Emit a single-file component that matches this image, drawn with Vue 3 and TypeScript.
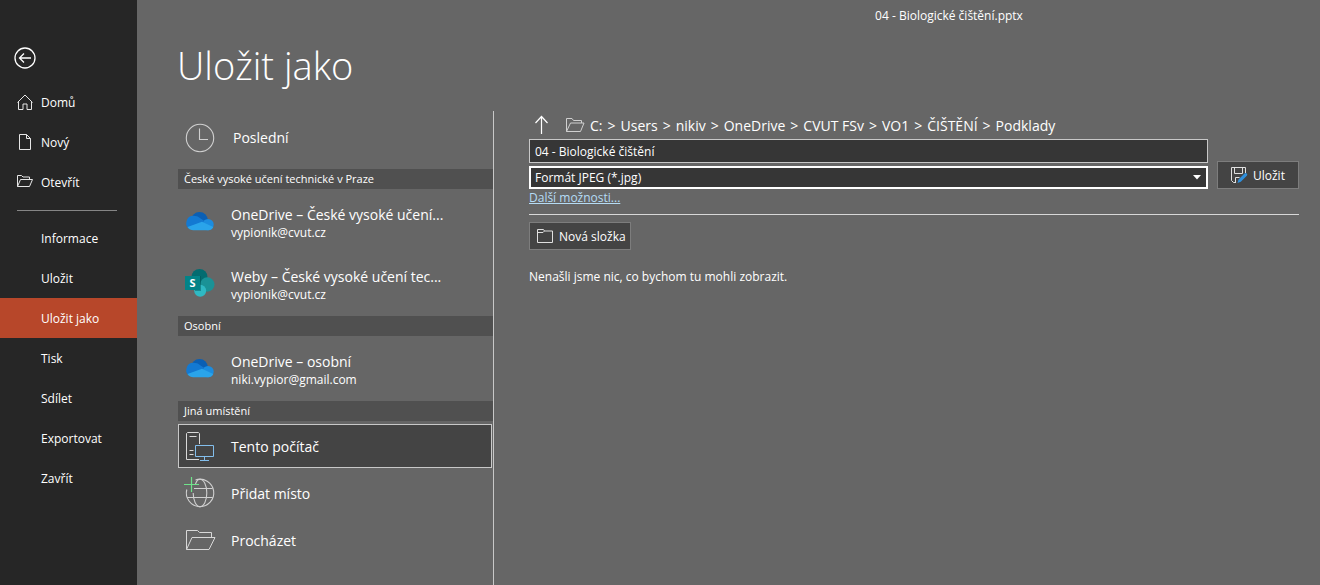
<script setup lang="ts">
import { ref } from 'vue'

interface NavEntry {
  id: string
  label: string
  icon?: 'home' | 'file' | 'folder'
}

interface Place {
  id: string
  title: string
  account?: string
  icon: 'onedrive' | 'sharepoint' | 'computer' | 'globe' | 'browse'
}

interface PlaceGroup {
  heading: string
  places: Place[]
}

const primaryNav: NavEntry[] = [
  { id: 'home', label: 'Domů', icon: 'home' },
  { id: 'new', label: 'Nový', icon: 'file' },
  { id: 'open', label: 'Otevřít', icon: 'folder' },
]

const secondaryNav: NavEntry[] = [
  { id: 'info', label: 'Informace' },
  { id: 'save', label: 'Uložit' },
  { id: 'saveas', label: 'Uložit jako' },
  { id: 'print', label: 'Tisk' },
  { id: 'share', label: 'Sdílet' },
  { id: 'export', label: 'Exportovat' },
  { id: 'close', label: 'Zavřít' },
]

const groups: PlaceGroup[] = [
  {
    heading: 'České vysoké učení technické v Praze',
    places: [
      { id: 'od-school', title: 'OneDrive – České vysoké učení...', account: 'vypionik@cvut.cz', icon: 'onedrive' },
      { id: 'sites', title: 'Weby – České vysoké učení tec...', account: 'vypionik@cvut.cz', icon: 'sharepoint' },
    ],
  },
  {
    heading: 'Osobní',
    places: [
      { id: 'od-personal', title: 'OneDrive – osobní', account: 'niki.vypior@gmail.com', icon: 'onedrive' },
    ],
  },
  {
    heading: 'Jiná umístění',
    places: [
      { id: 'pc', title: 'Tento počítač', icon: 'computer' },
      { id: 'add', title: 'Přidat místo', icon: 'globe' },
      { id: 'browse', title: 'Procházet', icon: 'browse' },
    ],
  },
]

const crumbs: string[] = ['C:', 'Users', 'nikiv', 'OneDrive', 'CVUT FSv', 'VO1', 'ČIŠTĚNÍ', 'Podklady']

const activeNav = ref('saveas')
const activePlace = ref('pc')
const fileName = ref('04 - Biologické čištění')
const format = ref('jpg')
</script>

<template>
  <div class="app">
    <nav class="sidebar" aria-label="Soubor">
      <button class="back" type="button" aria-label="Zpět">
        <svg width="22" height="22" viewBox="0 0 22 22" fill="none" stroke="#fff" stroke-width="1.3">
          <circle cx="11" cy="11" r="10" />
          <path d="M17 11H5.5M10 6.500L5.500 11l4.500 4.500" />
        </svg>
      </button>

      <button v-for="item in primaryNav" :key="item.id" type="button" class="nav-item">
        <svg class="nav-icon" width="16" height="16" viewBox="0 0 16 16" fill="none" stroke="#e6e6e6">
          <path v-if="item.icon === 'home'" d="M.5 8.500L8 1l7.500 7.500M1.500 7.500v8h4.500v-5.500h4v5.500h4.500v-8" />
          <path v-else-if="item.icon === 'file'" d="M2.500.5h7l4 4v11h-11zM9.500.5v4h4" />
          <path v-else d="M.5 12.500v-11h4l1.500 1.500h6.500v2.500M.5 12.500l3-7h12l-3 7z" />
        </svg>
        <span>{{ item.label }}</span>
      </button>

      <hr class="nav-rule" />

      <button
        v-for="item in secondaryNav"
        :key="item.id"
        type="button"
        class="nav-item indented"
        :class="{ active: item.id === activeNav }"
        @click="activeNav = item.id"
      >
        {{ item.label }}
      </button>
    </nav>

    <main class="main">
      <header class="titlebar">04 - Biologické čištění.pptx</header>
      <h1>Uložit jako</h1>

      <div class="columns">
        <section class="places" aria-label="Umístění">
          <button type="button" class="recent">
            <svg width="30" height="30" viewBox="0 0 30 30" fill="none" stroke="#d0d0d0" stroke-width="1.100">
              <circle cx="15" cy="15" r="13.700" />
              <path d="M14.500 5.500v11h8.500" />
            </svg>
            <span class="recent-title">Poslední</span>
          </button>

          <template v-for="group in groups" :key="group.heading">
            <h2>{{ group.heading }}</h2>
            <div class="group">
              <button
                v-for="place in group.places"
                :key="place.id"
                type="button"
                class="place"
                :class="{ tall: place.account, selected: place.id === activePlace }"
                @click="activePlace = place.id"
              >
                <svg v-if="place.icon === 'onedrive'" width="30" height="30" viewBox="0 0 30 30">
                  <circle cx="14.500" cy="14.500" r="8.500" fill="#0a5fb4" />
                  <circle cx="23" cy="18.600" r="5.700" fill="#1b8cdf" />
                  <path d="M8.500 9.800c2.500 0 4.300.7 6 1.900l4.500 3L17 18 5 23.300A7.200 7.200 0 0 1 8.500 9.800z" fill="#1379d2" />
                  <path d="M2.500 21L17 15.700 28.200 21A5.700 5.700 0 0 1 23 24.300H8.500A7.200 7.200 0 0 1 2.500 21z" fill="#2aa4ea" />
                </svg>
                <svg v-else-if="place.icon === 'sharepoint'" width="30" height="30" viewBox="0 0 30 30">
                  <circle cx="14.500" cy="9" r="8" fill="#036c70" />
                  <circle cx="22.300" cy="16.500" r="7.200" fill="#1a9296" />
                  <circle cx="15.200" cy="22.800" r="6" fill="#2fb9c3" />
                  <path d="M15 8h1v15h-6v-1h5z" fill="#024f52" opacity=".45" />
                  <rect x="0" y="8" width="15" height="14" fill="#038387" />
                  <text x="7.500" y="19" class="badge-letter">S</text>
                </svg>
                <svg v-else-if="place.icon === 'computer'" width="30" height="30" viewBox="0 0 30 30" fill="none">
                  <path d="M14.500 13V2.500l-1-1h-11l-1 1v26h12.500M4.500 5.500h7M4.500 19.500h4M4.500 23.500h4" stroke="#d8d8d8" />
                  <path d="M10.500 14.500h18v11h-18zM19.500 25.500v4M15 29.500h9" stroke="#83beec" />
                </svg>
                <svg v-else-if="place.icon === 'globe'" width="30" height="30" viewBox="0 0 30 30" fill="none">
                  <g stroke="#d0d0d0" stroke-width="1.100">
                    <path d="M10.500 2a13.700 13.700 0 1 1-8.700 9.500" />
                    <path d="M10.500 6c1-2.800 2.500-4.700 4.500-4.700 3.800 0 6.800 6 6.800 13.700s-3 13.700-6.800 13.700S8.200 22.700 8.200 15" />
                    <path d="M9 10.500h18.500M2.200 19.500h25.600" />
                  </g>
                  <path d="M6.500-1v15M-1 6.500h15" stroke="#6fe38a" stroke-width="1.200" />
                </svg>
                <svg v-else width="30" height="30" viewBox="0 0 30 30" fill="none" stroke="#d8d8d8">
                  <path d="M1.500 24.500v-19h11l2 2h12v5M1.500 24.500l5.500-12h23l-6 12z" />
                </svg>
                <span class="place-text">
                  <span class="place-title">{{ place.title }}</span>
                  <span v-if="place.account">{{ place.account }}</span>
                </span>
              </button>
            </div>
          </template>
        </section>

        <section class="details" aria-label="Podrobnosti souboru">
          <div class="path">
            <button type="button" class="up" aria-label="O úroveň výš">
              <svg width="16" height="20" viewBox="0 0 16 20" fill="none" stroke="#fff" stroke-width="1.200">
                <path d="M7.500 19V2M1.500 8l6-6.500 6 6.500" />
              </svg>
            </button>
            <svg width="20" height="16" viewBox="0 0 20 16" fill="none" stroke="#d0d0d0">
              <path d="M1.500 14.500v-13h5.500l1.500 2h8v2.500M1.500 14.500l4-8.500h13.500l-3.500 8.500z" />
            </svg>
            <div class="crumbs">
              <template v-for="(crumb, index) in crumbs" :key="crumb">
                <span v-if="index > 0">&gt;</span>
                <span>{{ crumb }}</span>
              </template>
            </div>
          </div>

          <div class="form">
            <div class="fields">
              <input v-model="fileName" class="field" type="text" aria-label="Název souboru" />
              <div class="select-wrap">
                <select v-model="format" class="field" aria-label="Typ souboru">
                  <option value="jpg">Formát JPEG (*.jpg)</option>
                </select>
                <svg class="caret" width="8" height="5" viewBox="0 0 8 5"><path d="M0 0h8L4 4.500z" fill="#fff" /></svg>
              </div>
            </div>
            <button type="button" class="btn save">
              <svg width="18" height="18" viewBox="0 0 18 18" fill="none">
                <path d="M6 16.500H3.500l-2-2v-13h14V7M4.500 1.500v6h8v-6M5.500 16.500v-5h4" stroke="#e0e0e0" />
                <path d="M8.500 13.500l6-6a1.600 1.600 0 0 1 2.300 2.300l-6 6-3.300 1.200z" fill="#2f8fdc" />
              </svg>
              <span>Uložit</span>
            </button>
          </div>

          <a class="more" href="#">Další možnosti...</a>
          <hr class="rule" />

          <button type="button" class="btn folder">
            <svg width="18" height="16" viewBox="0 0 18 16" fill="none" stroke="#e0e0e0">
              <path d="M1.500 14.500v-13h6l1 1.500h8v11.500zM1.500 4.500h5.500l1.500-1.500" />
            </svg>
            <span>Nová složka</span>
          </button>

          <p class="empty">Nenašli jsme nic, co bychom tu mohli zobrazit.</p>
        </section>
      </div>
    </main>
  </div>
</template>

<style>
body {
  margin: 0;
  background: #666;
}
</style>

<style scoped>
.app,
.app * {
  box-sizing: border-box;
}

.app {
  display: flex;
  min-height: 100vh;
  background: #666;
  color: #fff;
  font-family: 'Open Sans', 'Noto Sans', sans-serif;
  font-size: 12px;
  line-height: 16px;
}

button {
  padding: 0;
  border: 0;
  background: none;
  color: inherit;
  font: inherit;
  text-align: left;
  cursor: pointer;
}

svg {
  display: block;
  flex: none;
  overflow: visible;
}

.sidebar {
  display: flex;
  flex: none;
  flex-direction: column;
  width: 137px;
  background: #262626;
}

.back {
  align-self: flex-start;
  margin: 47px 0 13px 14px;
}

.nav-item {
  display: flex;
  align-items: center;
  gap: 8px;
  height: 40px;
  padding: 2px 0 0 17px;
}

.nav-icon {
  margin-bottom: 2px;
}

.nav-item.indented {
  padding-left: 41px;
}

.nav-item.active {
  background: #b7472a;
}

.nav-rule {
  width: 100px;
  height: 1px;
  margin: 8px 0 7px 17px;
  border: 0;
  background: #858585;
}

.main {
  display: flex;
  flex: 1;
  flex-direction: column;
  min-width: 0;
}

.titlebar {
  height: 32px;
  padding: 8px 0 0 441px;
  text-align: center;
}

h1 {
  margin: 6px 0 19px 40px;
  font-size: 38px;
  font-weight: 300;
  line-height: 54px;
}

.columns {
  display: flex;
  flex: 1;
}

.places {
  flex: none;
  width: 357px;
  padding-left: 41px;
  border-right: 1px solid #c8c8c8;
}

.recent {
  display: flex;
  align-items: center;
  gap: 18px;
  width: 100%;
  height: 58px;
  padding: 0 0 4px 7px;
}

.recent-title,
.place-title,
.crumbs {
  font-size: 14px;
  line-height: 20px;
  white-space: nowrap;
}

h2 {
  margin: 0;
  padding: 0 6px;
  background: #505050;
  font-size: 11px;
  font-weight: 500;
  line-height: 20px;
}

.group {
  display: flex;
  flex-direction: column;
  gap: 3px;
  padding: 3px 1px 3px 0;
}

.place {
  display: flex;
  align-items: center;
  gap: 16px;
  height: 44px;
  padding-left: 6px;
  border: 1px solid transparent;
}

.place.tall {
  height: 59px;
}

.place.tall svg {
  margin-bottom: 1px;
}

.place.selected {
  border-color: #c8c8c8;
  background: #444;
}

.place-text {
  display: flex;
  flex-direction: column;
  padding-top: 2px;
}

.badge-letter {
  fill: #fff;
  font-size: 11px;
  font-weight: 700;
  text-anchor: middle;
}

.details {
  flex: 1;
  min-width: 0;
  padding: 0 21px 0 35px;
}

.path {
  display: flex;
  align-items: center;
  height: 28px;
  gap: 15px;
  padding-left: 5px;
}

.crumbs {
  display: flex;
  gap: 5px;
  margin-left: -10px;
  padding-top: 2px;
}

.form {
  display: flex;
  align-items: flex-end;
  gap: 9px;
}

.fields {
  display: flex;
  flex: 1;
  flex-direction: column;
  gap: 3px;
}

.field {
  display: block;
  width: 100%;
  height: 24px;
  margin: 0;
  padding: 0 5px;
  border: 1px solid #c8c8c8;
  border-radius: 0;
  outline: none;
  background: #363636;
  color: #fff;
  font: inherit;
  appearance: none;
}

.select-wrap {
  position: relative;
}

.select-wrap .field {
  height: 23px;
  padding: 0 4px;
  border: 2px solid #fff;
}

.caret {
  position: absolute;
  top: 9px;
  right: 7px;
  pointer-events: none;
}

.btn {
  display: flex;
  align-items: center;
  height: 28px;
  border: 1px solid #7d7d7d;
  background: #444;
  white-space: nowrap;
}

.btn span {
  padding-top: 2px;
}

.save {
  gap: 5px;
  width: 82px;
  padding-left: 12px;
}

.folder {
  gap: 5px;
  width: 102px;
  padding-left: 6px;
}

.more {
  display: table;
  margin-top: 1px;
  color: #b5dcf5;
}

.rule {
  height: 1px;
  margin: 8px 0 7px;
  border: 0;
  background: #d8d8d8;
}

.empty {
  margin: 19px 0 0;
}
</style>
